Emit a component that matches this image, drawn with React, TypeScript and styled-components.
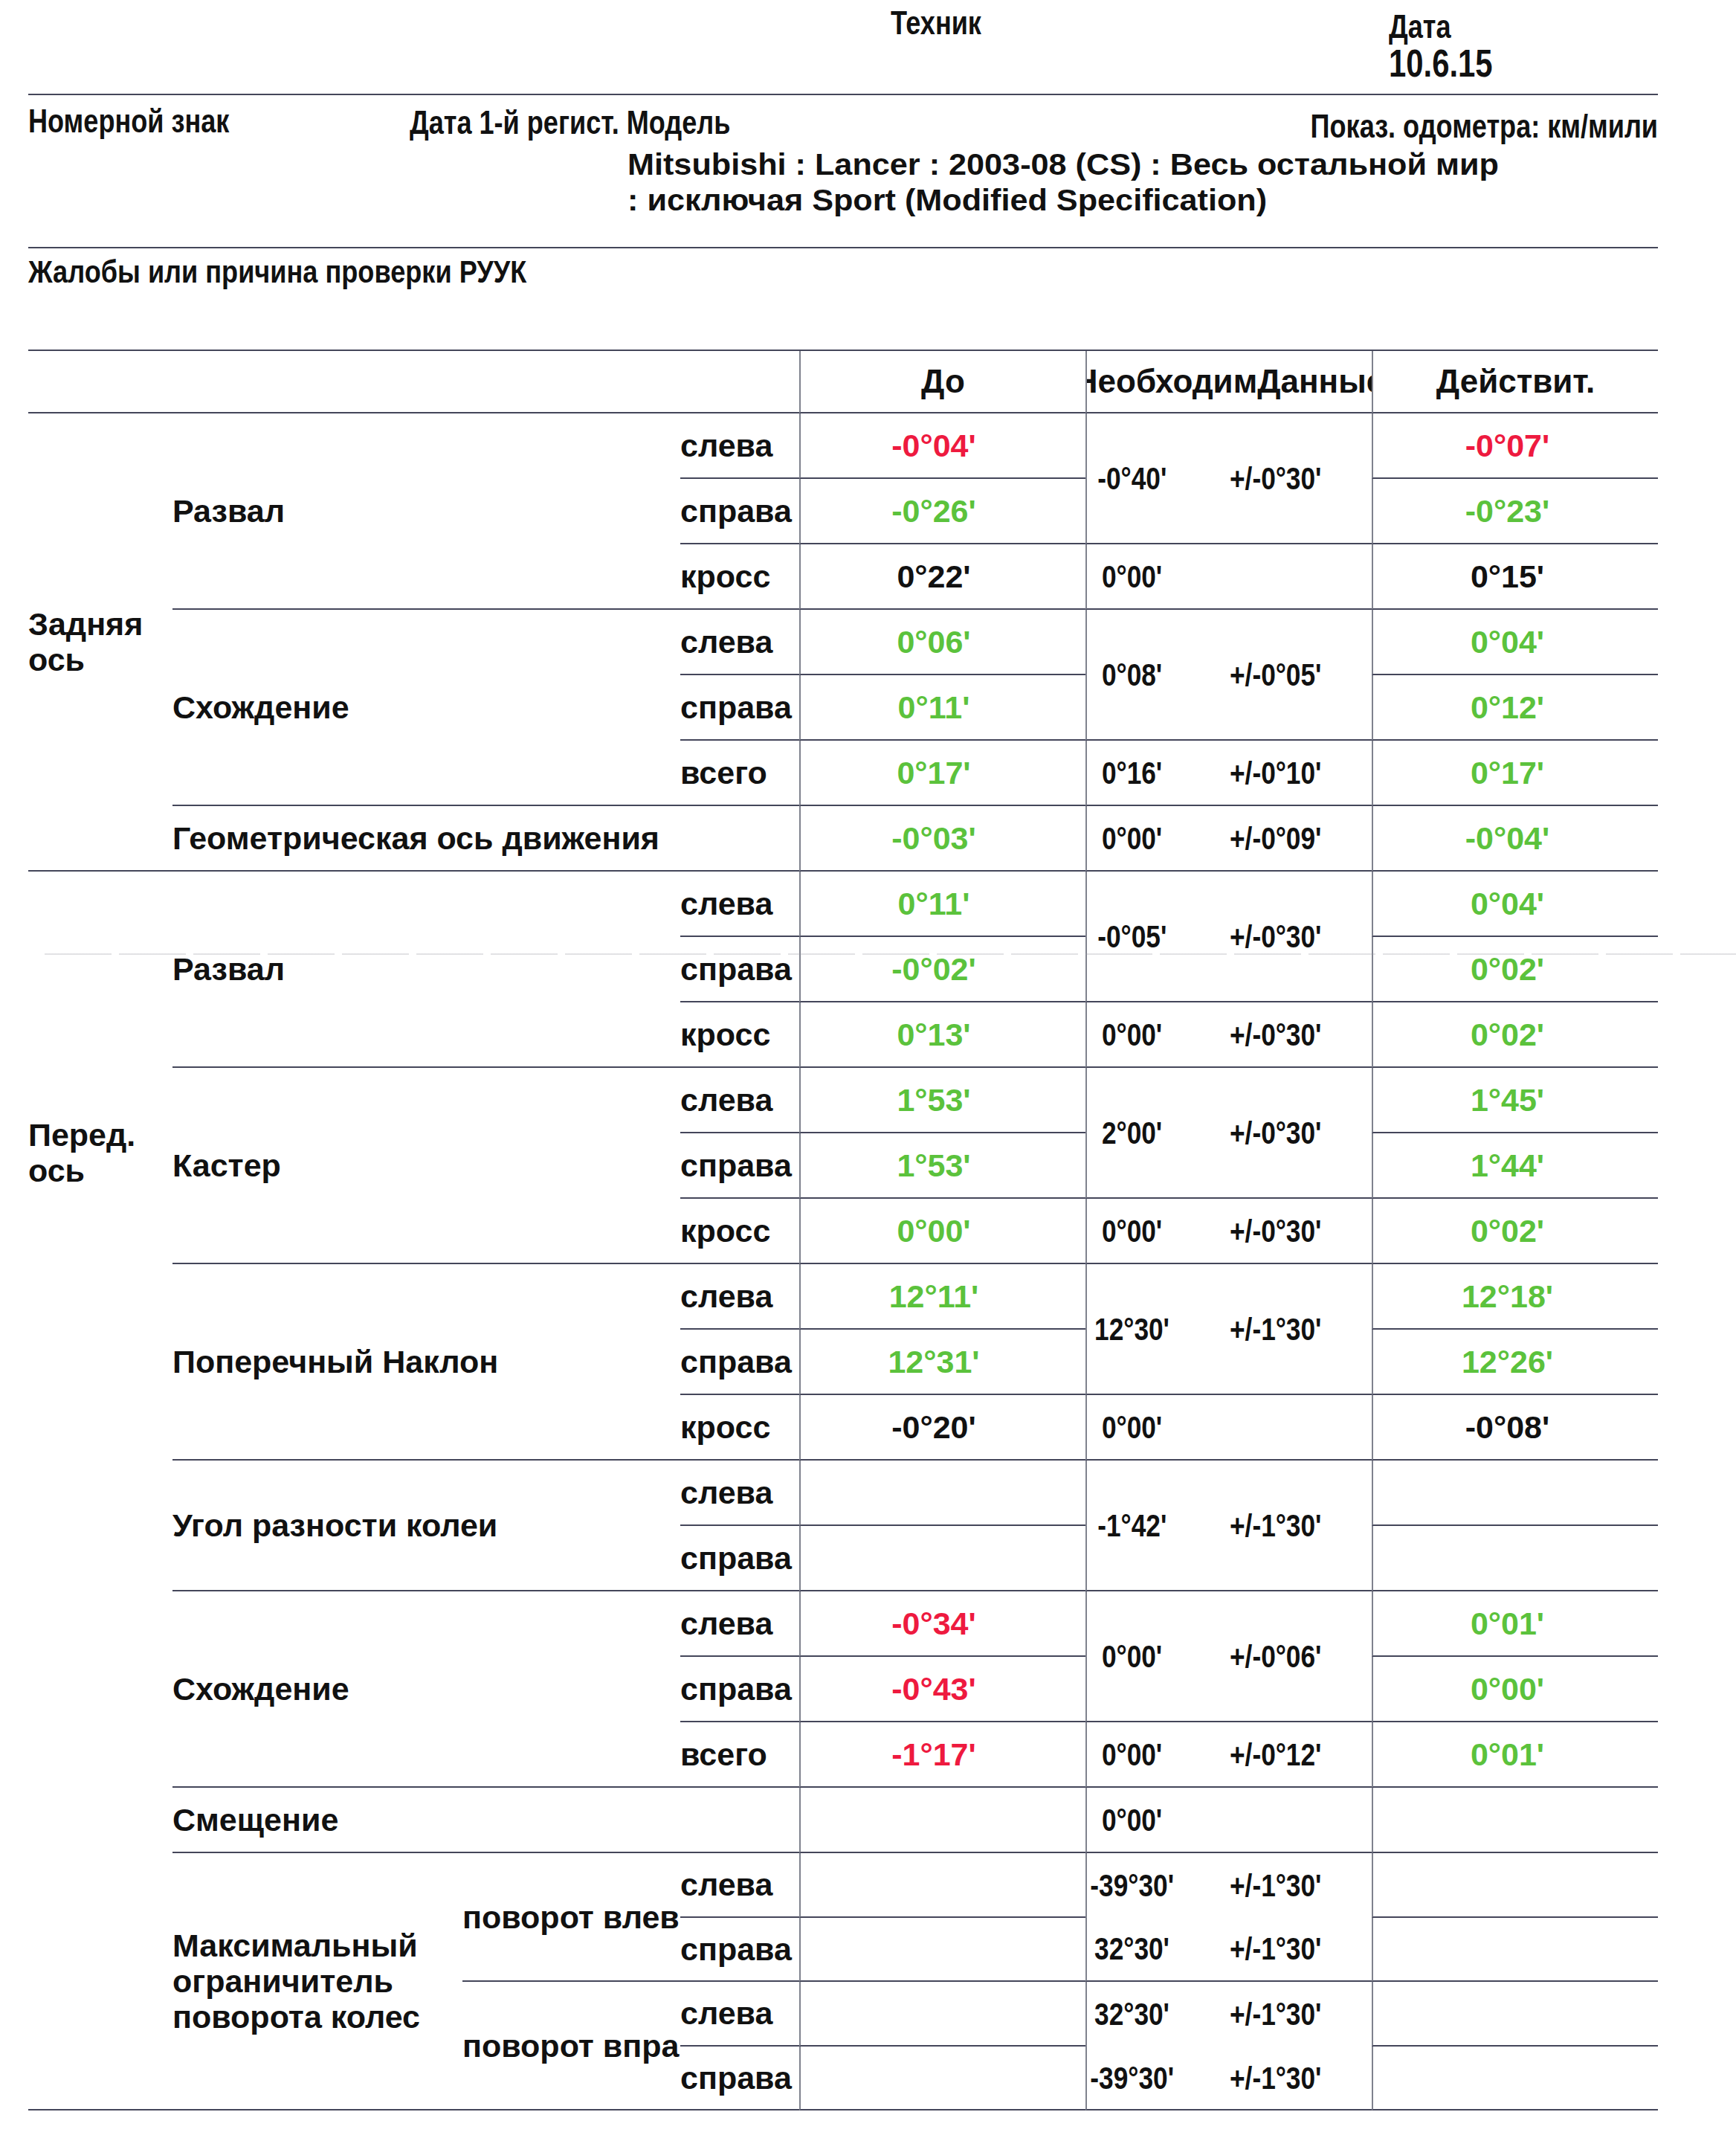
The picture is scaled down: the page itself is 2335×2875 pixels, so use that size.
import React from "react";
import styled, { createGlobalStyle } from "styled-components";

const LINE = "#44465a";
const VLINE = "#7f828e";
const RED = "#ee1a3f";
const GREEN = "#5bc23c";
const INK = "#111111";

const GlobalStyle = createGlobalStyle`
  html, body { margin: 0; padding: 0; background: #ffffff; }
  body { font-family: "Liberation Sans", Arial, sans-serif; color: ${INK}; }
  #root { min-height: 2875px; }
`;

type Tone = "r" | "g" | "k";

const toneColor = (t: Tone) => (t === "r" ? RED : t === "g" ? GREEN : INK);

const Page = styled.div`
  position: relative;
  width: 2335px;
  min-height: 2875px;
  box-sizing: border-box;
  padding: 0 105px 0 38px;
  font-weight: 700;
  overflow: hidden;
`;

/* ---------- header area ---------- */

const TopBar = styled.header`
  display: grid;
  grid-template-columns: 1160px 670px 1fr;
  height: 128px;
  box-sizing: border-box;
  border-bottom: 2px solid ${LINE};
`;

const Narrow = styled.span<{ $size: number; $lh: number; $origin?: "left" | "right" | "center" }>`
  display: inline-block;
  font-size: ${(p) => p.$size}px;
  line-height: ${(p) => p.$lh}px;
  white-space: nowrap;
  transform: scaleX(0.82);
  transform-origin: ${(p) => p.$origin ?? "left"} center;
`;

const TechSlot = styled.div`
  grid-column: 2;
  padding-top: 9px;
`;

const DateSlot = styled.div`
  grid-column: 3;
  display: flex;
  flex-direction: column;
  align-items: flex-start;
  padding-top: 14px;
  gap: 1px;
`;

const InfoSection = styled.section`
  height: 206px;
  box-sizing: border-box;
  border-bottom: 2px solid ${LINE};
  padding-top: 13px;
`;

const InfoRow = styled.div`
  display: flex;
  align-items: flex-start;
`;

const PlateSlot = styled.div`
  width: 513px;
  flex: none;
`;

const RegSlot = styled.div`
  flex: 1;
  padding-top: 2px;
`;

const OdoSlot = styled.div`
  padding-top: 7px;
  text-align: right;
`;

const ModelBlock = styled.div`
  margin: 5px 0 0 806px;
`;

const ModelLine = styled.div`
  font-size: 40px;
  line-height: 48px;
  white-space: nowrap;
  transform: scaleX(1.08);
  transform-origin: left center;
`;

const ComplaintSection = styled.section`
  height: 136px;
  box-sizing: border-box;
  padding-top: 9px;
`;

const ComplaintText = styled.div`
  font-size: 43px;
  line-height: 44px;
  white-space: nowrap;
  transform: scaleX(0.84);
  transform-origin: left center;
`;

/* ---------- table ---------- */

const Table = styled.div`
  display: grid;
  grid-template-columns: 194px 390px 293px 160px 385px 385px 385px;
  grid-template-rows: 84px repeat(22, 88px) repeat(4, 86.6px);
  border-top: 2px solid ${LINE};
`;

const GridCell = styled.div<{ $col: string; $row: string; $line?: boolean }>`
  grid-column: ${(p) => p.$col};
  grid-row: ${(p) => p.$row};
  box-sizing: border-box;
  min-width: 0;
  display: flex;
  align-items: center;
  border-bottom: ${(p) => (p.$line ? `2px solid ${LINE}` : "none")};
`;

const HeadCell = styled(GridCell)`
  justify-content: center;
  overflow: hidden;
  white-space: nowrap;
  font-size: 44px;
  line-height: 50px;
  border-left: 2px solid ${VLINE};
`;

const AxleCell = styled(GridCell)<{ $padTop?: number }>`
  align-items: ${(p) => (p.$padTop ? "flex-start" : "center")};
  padding-top: ${(p) => p.$padTop ?? 0}px;
  font-size: 43px;
  line-height: 48px;
`;

const GroupCell = styled(GridCell)`
  font-size: 43px;
  line-height: 48px;
  white-space: nowrap;
`;

const SubGroupCell = styled(GridCell)`
  font-size: 43px;
  line-height: 48px;
  white-space: nowrap;
`;

const SideCell = styled(GridCell)`
  font-size: 43px;
  line-height: 48px;
  white-space: nowrap;
`;

const ValueCell = styled(GridCell)<{ $tone: Tone; $shift: number }>`
  justify-content: center;
  padding-right: ${(p) => p.$shift}px;
  font-size: 43px;
  line-height: 48px;
  color: ${(p) => toneColor(p.$tone)};
  border-left: 2px solid ${VLINE};
`;

const SpecCell = styled(GridCell)`
  flex-direction: column;
  align-items: stretch;
  border-left: 2px solid ${VLINE};
`;

const SpecLine = styled.div`
  flex: 1;
  display: flex;
  align-items: center;
  white-space: nowrap;
`;

const SpecValue = styled.div`
  width: 122px;
  flex: none;
  display: flex;
  justify-content: center;
`;

const SpecTol = styled.div`
  margin-left: 70px;
`;

const FoldMark = styled.div`
  position: absolute;
  left: 60px;
  right: 0;
  top: 1282px;
  height: 2px;
  background: repeating-linear-gradient(
    90deg,
    rgba(150, 150, 160, 0.28) 0 90px,
    transparent 90px 100px
  );
  pointer-events: none;
`;

/* ---------- data ---------- */

const valueRows: [string, Tone, string, Tone][] = [
  ["-0°04'", "r", "-0°07'", "r"],
  ["-0°26'", "g", "-0°23'", "g"],
  ["0°22'", "k", "0°15'", "k"],
  ["0°06'", "g", "0°04'", "g"],
  ["0°11'", "g", "0°12'", "g"],
  ["0°17'", "g", "0°17'", "g"],
  ["-0°03'", "g", "-0°04'", "g"],
  ["0°11'", "g", "0°04'", "g"],
  ["-0°02'", "g", "0°02'", "g"],
  ["0°13'", "g", "0°02'", "g"],
  ["1°53'", "g", "1°45'", "g"],
  ["1°53'", "g", "1°44'", "g"],
  ["0°00'", "g", "0°02'", "g"],
  ["12°11'", "g", "12°18'", "g"],
  ["12°31'", "g", "12°26'", "g"],
  ["-0°20'", "k", "-0°08'", "k"],
  ["", "k", "", "k"],
  ["", "k", "", "k"],
  ["-0°34'", "r", "0°01'", "g"],
  ["-0°43'", "r", "0°00'", "g"],
  ["-1°17'", "r", "0°01'", "g"],
  ["", "k", "", "k"],
  ["", "k", "", "k"],
  ["", "k", "", "k"],
  ["", "k", "", "k"],
  ["", "k", "", "k"],
];

type Spec = { start: number; span: number; lines: [string, string][] };

const specs: Spec[] = [
  { start: 1, span: 2, lines: [["-0°40'", "+/-0°30'"]] },
  { start: 3, span: 1, lines: [["0°00'", ""]] },
  { start: 4, span: 2, lines: [["0°08'", "+/-0°05'"]] },
  { start: 6, span: 1, lines: [["0°16'", "+/-0°10'"]] },
  { start: 7, span: 1, lines: [["0°00'", "+/-0°09'"]] },
  { start: 8, span: 2, lines: [["-0°05'", "+/-0°30'"]] },
  { start: 10, span: 1, lines: [["0°00'", "+/-0°30'"]] },
  { start: 11, span: 2, lines: [["2°00'", "+/-0°30'"]] },
  { start: 13, span: 1, lines: [["0°00'", "+/-0°30'"]] },
  { start: 14, span: 2, lines: [["12°30'", "+/-1°30'"]] },
  { start: 16, span: 1, lines: [["0°00'", ""]] },
  { start: 17, span: 2, lines: [["-1°42'", "+/-1°30'"]] },
  { start: 19, span: 2, lines: [["0°00'", "+/-0°06'"]] },
  { start: 21, span: 1, lines: [["0°00'", "+/-0°12'"]] },
  { start: 22, span: 1, lines: [["0°00'", ""]] },
  {
    start: 23,
    span: 2,
    lines: [
      ["-39°30'", "+/-1°30'"],
      ["32°30'", "+/-1°30'"],
    ],
  },
  {
    start: 25,
    span: 2,
    lines: [
      ["32°30'", "+/-1°30'"],
      ["-39°30'", "+/-1°30'"],
    ],
  },
];

type Group = { label: string; start: number; sides: string[] | null };

const LR3 = ["слева", "справа", "кросс"];
const LRT = ["слева", "справа", "всего"];

const groups: Group[] = [
  { label: "Развал", start: 1, sides: LR3 },
  { label: "Схождение", start: 4, sides: LRT },
  { label: "Геометрическая ось движения", start: 7, sides: null },
  { label: "Развал", start: 8, sides: LR3 },
  { label: "Кастер", start: 11, sides: LR3 },
  { label: "Поперечный Наклон", start: 14, sides: LR3 },
  { label: "Угол разности колеи", start: 17, sides: ["слева", "справа"] },
  { label: "Схождение", start: 19, sides: LRT },
  { label: "Смещение", start: 22, sides: null },
];

const gr = (r: number, span = 1) => `${r + 1} / span ${span}`;

export default function App() {
  return (
    <Page>
      <GlobalStyle />

      <TopBar>
        <TechSlot>
          <Narrow $size={44} $lh={44}>
            Техник
          </Narrow>
        </TechSlot>
        <DateSlot>
          <Narrow $size={44} $lh={44}>
            Дата
          </Narrow>
          <Narrow $size={51} $lh={54}>
            10.6.15
          </Narrow>
        </DateSlot>
      </TopBar>

      <InfoSection>
        <InfoRow>
          <PlateSlot>
            <Narrow $size={44} $lh={44}>
              Номерной знак
            </Narrow>
          </PlateSlot>
          <RegSlot>
            <Narrow $size={44} $lh={44}>
              Дата 1-й регист. Модель
            </Narrow>
          </RegSlot>
          <OdoSlot>
            <Narrow $size={44} $lh={44} $origin="right">
              Показ. одометра: км/мили
            </Narrow>
          </OdoSlot>
        </InfoRow>
        <ModelBlock>
          <ModelLine>Mitsubishi : Lancer : 2003-08 (CS) : Весь остальной мир</ModelLine>
          <ModelLine>: исключая Sport (Modified Specification)</ModelLine>
        </ModelBlock>
      </InfoSection>

      <ComplaintSection>
        <ComplaintText>Жалобы или причина проверки РУУК</ComplaintText>
      </ComplaintSection>

      <Table>
        <GridCell $col="1 / span 4" $row="1" $line />
        <HeadCell $col="5" $row="1" $line>
          До
        </HeadCell>
        <HeadCell $col="6" $row="1" $line>
          НеобходимДанные
        </HeadCell>
        <HeadCell $col="7" $row="1" $line>
          Действит.
        </HeadCell>

        <AxleCell $col="1" $row={gr(1, 7)} $line>
          Задняя
          <br />
          ось
        </AxleCell>
        <AxleCell $col="1" $row={gr(8, 19)} $line $padTop={330}>
          Перед.
          <br />
          ось
        </AxleCell>

        {groups.map((g) =>
          g.sides ? (
            <React.Fragment key={`g${g.start}`}>
              <GroupCell $col="2 / span 2" $row={gr(g.start, g.sides.length)} $line>
                {g.label}
              </GroupCell>
              {g.sides.map((s, i) => (
                <SideCell key={s} $col="4" $row={gr(g.start + i)} $line>
                  {s}
                </SideCell>
              ))}
            </React.Fragment>
          ) : (
            <GroupCell key={`g${g.start}`} $col="2 / span 3" $row={gr(g.start)} $line>
              {g.label}
            </GroupCell>
          )
        )}

        <GroupCell $col="2" $row={gr(23, 4)} $line>
          <span>
            Максимальный
            <br />
            ограничитель
            <br />
            поворота колес
          </span>
        </GroupCell>
        <SubGroupCell $col="3" $row={gr(23, 2)} $line>
          поворот влев
        </SubGroupCell>
        <SubGroupCell $col="3" $row={gr(25, 2)} $line>
          поворот впра
        </SubGroupCell>
        {["слева", "справа", "слева", "справа"].map((s, i) => (
          <SideCell key={`m${i}`} $col="4" $row={gr(23 + i)} $line>
            {s}
          </SideCell>
        ))}

        {valueRows.map(([d, dt, f, ft], i) => (
          <React.Fragment key={`v${i}`}>
            <ValueCell $col="5" $row={gr(i + 1)} $line $tone={dt} $shift={25}>
              {d}
            </ValueCell>
            <ValueCell $col="7" $row={gr(i + 1)} $line $tone={ft} $shift={22}>
              {f}
            </ValueCell>
          </React.Fragment>
        ))}

        {specs.map((s) => (
          <SpecCell key={`s${s.start}`} $col="6" $row={gr(s.start, s.span)} $line>
            {s.lines.map(([v, t], j) => (
              <SpecLine key={j}>
                <SpecValue>
                  <Narrow $size={43} $lh={48} $origin="center">
                    {v}
                  </Narrow>
                </SpecValue>
                {t && (
                  <SpecTol>
                    <Narrow $size={43} $lh={48}>
                      {t}
                    </Narrow>
                  </SpecTol>
                )}
              </SpecLine>
            ))}
          </SpecCell>
        ))}
      </Table>

      <FoldMark />
    </Page>
  );
}
